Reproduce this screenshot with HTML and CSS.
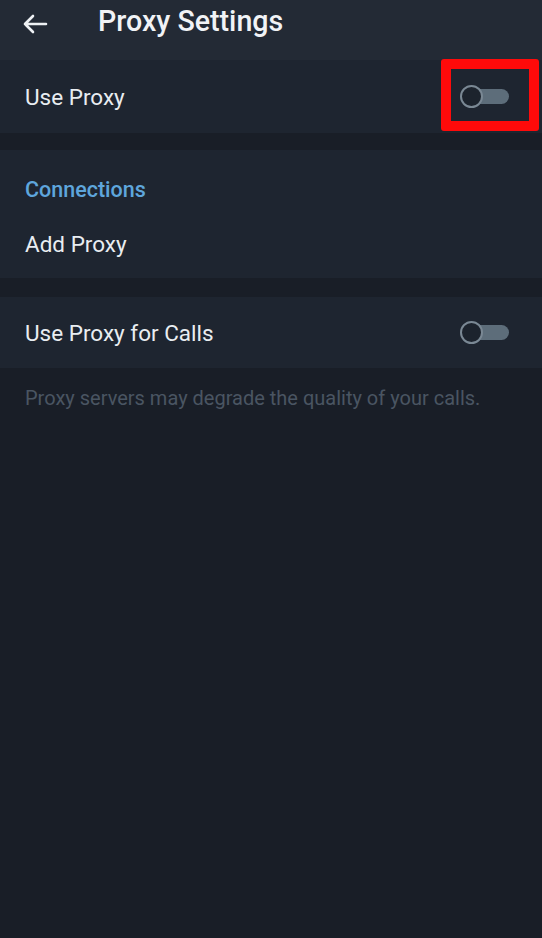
FILE: index.html
```html
<!DOCTYPE html>
<html lang="en">
<head>
<meta charset="utf-8">
<title>Proxy Settings</title>
<link rel="stylesheet" href="styles.css">
</head>
<body>
<div class="screen">
  <header class="app-bar">
    <svg class="back" width="26" height="20" viewBox="0 0 26 20" aria-hidden="true">
      <path d="M24 10H3M11 2L3 10l8 8" fill="none" stroke="#eef1f4" stroke-width="2.6" stroke-linecap="round" stroke-linejoin="round"/>
    </svg>
    <h1 class="title">Proxy Settings</h1>
  </header>

  <section class="card card-single">
    <div class="row">
      <span class="row-label">Use Proxy</span>
      <span class="toggle"><span class="track"></span><span class="knob"></span></span>
    </div>
    <span class="highlight"></span>
  </section>

  <section class="card card-connections">
    <div class="section-label">Connections</div>
    <div class="row row-add">
      <span class="row-label">Add Proxy</span>
    </div>
  </section>

  <section class="card card-calls">
    <div class="row">
      <span class="row-label">Use Proxy for Calls</span>
      <span class="toggle"><span class="track"></span><span class="knob"></span></span>
    </div>
  </section>

  <p class="hint">Proxy servers may degrade the quality of your calls.</p>
</div>
</body>
</html>
```

FILE: styles.css
```css
html, body {
  margin: 0;
  padding: 0;
  background: #191e27;
}

body {
  font-family: Roboto, "Noto Sans", "Liberation Sans", sans-serif;
  color: #e9edf1;
  width: 542px;
  height: 938px;
  overflow: hidden;
}

.screen {
  display: flex;
  flex-direction: column;
  min-height: 938px;
  background: #191e27;
}

.app-bar {
  height: 60px;
  display: flex;
  align-items: flex-start;
  padding-left: 22px;
  background: #232a35;
  box-sizing: border-box;
}

.back {
  display: block;
  margin-top: 14px;
}

.title {
  margin: 5px 0 0 50px;
  font-size: 28.6px;
  font-weight: 500;
  color: #f1f3f6;
  line-height: 32px;
}

.card {
  background: #1e2530;
  position: relative;
}

.row {
  display: flex;
  align-items: center;
  justify-content: space-between;
  padding: 0 33px 0 25px;
}

.card-single .row {
  height: 73px;
}

.card-connections {
  margin-top: 17px;
  padding-top: 26px;
  height: 128px;
  box-sizing: border-box;
}

.section-label {
  padding-left: 25px;
  height: 28px;
  line-height: 28px;
  font-size: 21.5px;
  font-weight: 500;
  color: #5ea6dc;
  margin-bottom: 6px;
}

.row-add {
  height: 68px;
}

.card-calls {
  margin-top: 19px;
}

.card-calls .row {
  height: 71px;
}

.row-label {
  font-size: 22.5px;
  color: #e9edf1;
}

.toggle {
  position: relative;
  width: 49px;
  height: 23px;
  flex: none;
}

.track {
  position: absolute;
  left: 11px;
  top: 4px;
  width: 38px;
  height: 15px;
  border-radius: 8px;
  background: #5d6d7a;
}

.knob {
  position: absolute;
  left: 0;
  top: 0;
  width: 23px;
  height: 23px;
  box-sizing: border-box;
  border-radius: 50%;
  border: 2px solid #7a8894;
  background: #1c232d;
}

.highlight {
  position: absolute;
  left: 441px;
  top: -1px;
  width: 98px;
  height: 72px;
  box-sizing: border-box;
  border: 10px solid #ff0a0a;
  border-radius: 3px;
}

.hint {
  margin: 18px 0 0;
  padding-left: 25px;
  font-size: 20px;
  line-height: 24px;
  color: #4a5562;
}
```
